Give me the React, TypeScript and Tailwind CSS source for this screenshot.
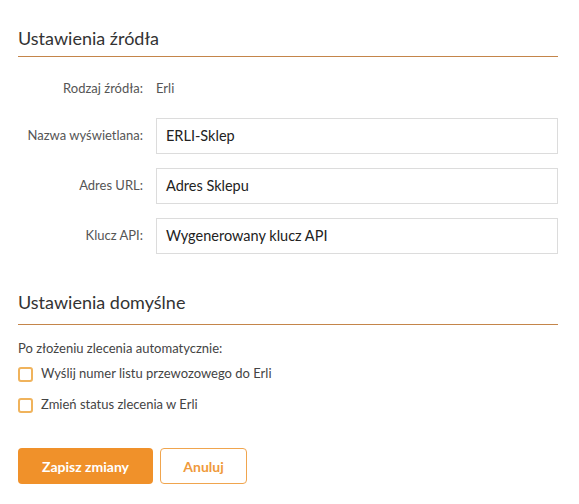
import React from 'react'

const fields = [
  { label: 'Nazwa wyświetlana:', value: 'ERLI-Sklep' },
  { label: 'Adres URL:', value: 'Adres Sklepu' },
  { label: 'Klucz API:', value: 'Wygenerowany klucz API' },
]

const Checkbox: React.FC<{ label: string }> = ({ label }) => (
  <label className="flex items-center gap-[8px] h-[16px]">
    <span className="w-[15px] h-[15px] rounded-[3px] border-2 border-[#f0b35c] bg-white" />
    <span className="text-[13px] text-[#444]">{label}</span>
  </label>
)

export default function App() {
  return (
    <div className="w-[579px] h-[504px] bg-white px-[18px] pt-[27px] text-[#444]" style={{ fontFamily: 'Lato, "Open Sans", sans-serif' }}>
      {/* Ustawienia zrodla */}
      <div className="w-[540px]">
        <h2 className="text-[18px] leading-[22px] text-[#333] pb-[7px] border-b border-[#c4854a]">Ustawienia źródła</h2>

        <div className="flex items-center mt-[22px] text-[13px]">
          <div className="w-[125px] text-right text-[#555]">Rodzaj źródła:</div>
          <div className="ml-[13px] text-[#555]">Erli</div>
        </div>

        <div className="mt-[19px] flex flex-col gap-[14px]">
          {fields.map((f) => (
            <div key={f.label} className="flex items-center">
              <div className="w-[125px] text-right text-[13px] text-[#555]">{f.label}</div>
              <div className="ml-[13px] flex-1 h-[36px] border border-[#dcdcdc] px-[9px] flex items-center text-[14.5px] text-[#222]">
                {f.value}
              </div>
            </div>
          ))}
        </div>

        {/* Ustawienia domyslne */}
        <h2 className="mt-[37px] text-[18px] leading-[22px] text-[#333] pb-[11px] border-b border-[#c4854a]">Ustawienia domyślne</h2>

        <p className="mt-[14px] text-[13px] text-[#444]">Po złożeniu zlecenia automatycznie:</p>
        <div className="mt-[8px] flex flex-col gap-[15px]">
          <Checkbox label="Wyślij numer listu przewozowego do Erli" />
          <Checkbox label="Zmień status zlecenia w Erli" />
        </div>

        <div className="mt-[35px] flex gap-[7px]">
          <button className="w-[135px] h-[36px] rounded-[4px] bg-[#f0912a] text-white text-[14px] font-bold">Zapisz zmiany</button>
          <button className="w-[87px] h-[36px] rounded-[4px] border border-[#f0a54e] bg-white text-[#ef9a3c] text-[14px] font-bold">Anuluj</button>
        </div>
      </div>
    </div>
  )
}
